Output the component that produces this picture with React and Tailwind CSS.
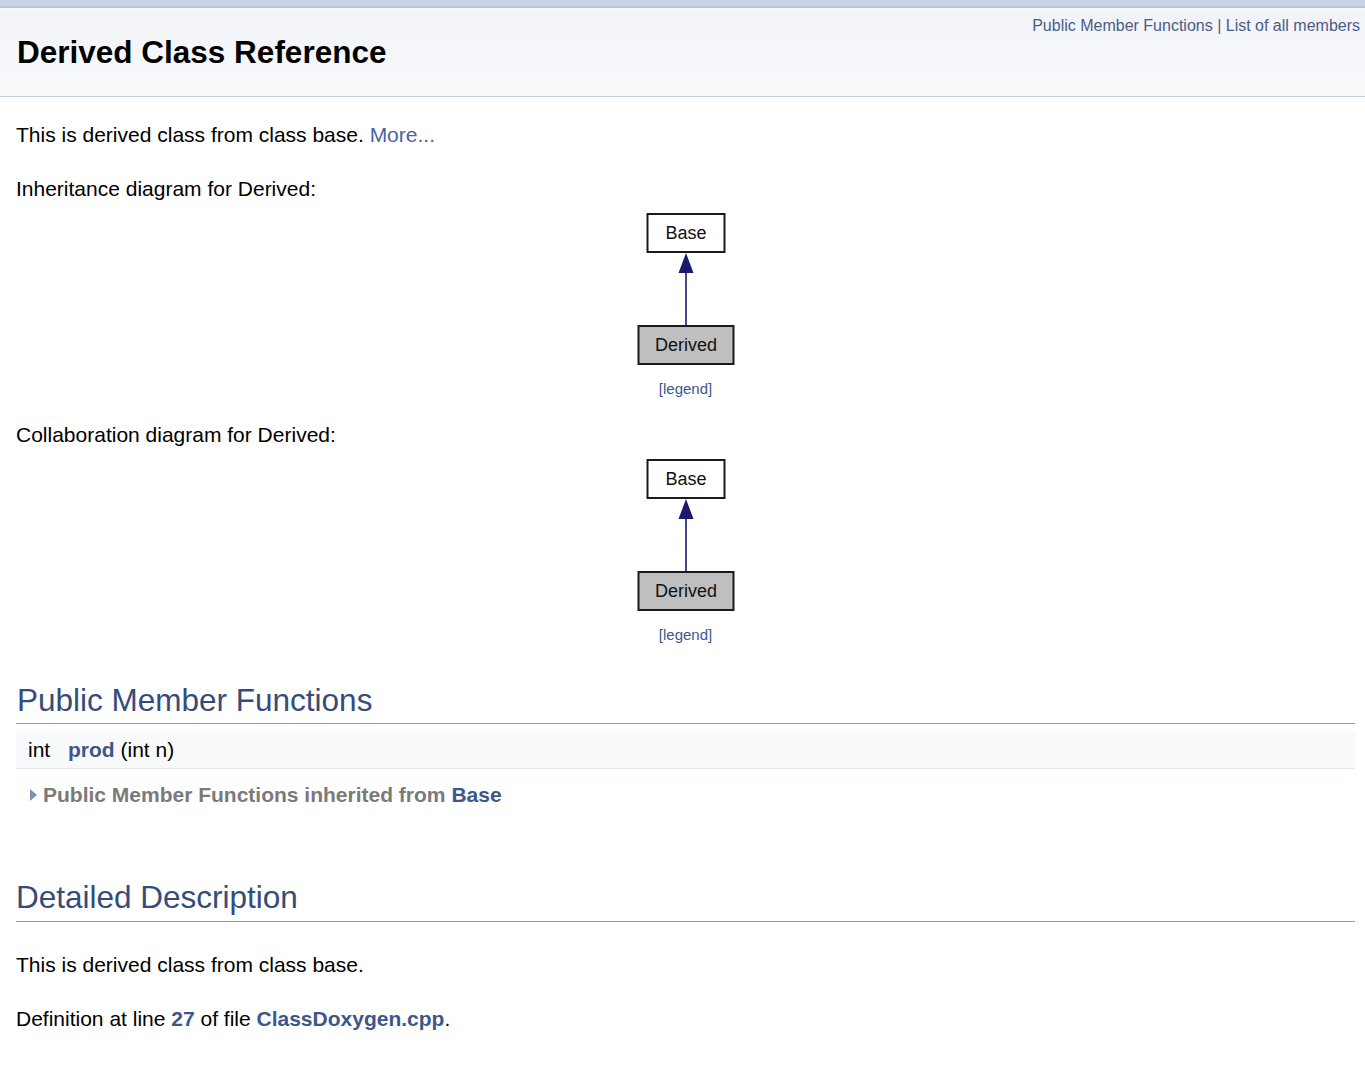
import React from 'react';

const font = { fontFamily: '"Liberation Sans", Arial, sans-serif' };

function ClassDiagram() {
  return (
    <div className="flex flex-col items-center">
      <svg width="100" height="156" viewBox="0 0 100 156" className="mt-[10px]">
        <rect x="11.5" y="3" width="77" height="38" fill="#ffffff" stroke="#1a1a1a" strokeWidth="2" />
        <text x="50" y="28" textAnchor="middle" fontSize="18" fill="#111" fontFamily='"Liberation Sans", Arial, sans-serif'>Base</text>
        <polygon points="50,42 42.5,62 57.5,62" fill="#191970" />
        <line x1="50" y1="61" x2="50" y2="114" stroke="#191970" strokeWidth="1.6" />
        <rect x="2.5" y="115" width="95" height="38" fill="#bfbfbf" stroke="#1a1a1a" strokeWidth="2" />
        <text x="50" y="140" textAnchor="middle" fontSize="18" fill="#111" fontFamily='"Liberation Sans", Arial, sans-serif'>Derived</text>
      </svg>
      <a className="mt-[13px] text-[15px] leading-[18px] text-[#3d578c]">[legend]</a>
    </div>
  );
}

export default function App() {
  return (
    <div className="min-h-screen bg-white text-black" style={font}>
      {/* nav strip */}
      <div className="h-[6px] bg-[#cbd4e7]" />
      <div className="h-[2px] bg-[#b9c3dc]" />
      <div className="h-[1px] bg-[#f7f9fc]" />

      {/* header */}
      <div className="relative h-[88px] border-b border-[#c4cfe5] bg-gradient-to-b from-[#f1f3f8] to-[#f9fafc] px-[17px]">
        <div className="absolute right-[5px] top-[7px] text-[16px] leading-[20px] text-[#4a5d87]">
          <a>Public Member Functions</a> | <a>List of all members</a>
        </div>
        <div className="pt-[25px] text-[31.5px] font-bold leading-[36px]">Derived Class Reference</div>
      </div>

      <div className="pl-[16px] pr-[10px] text-[21px] leading-[24px]">
        <p className="mt-[26px]">
          This is derived class from class base. <a className="text-[#4665a2]">More...</a>
        </p>

        <p className="mt-[30px]">Inheritance diagram for Derived:</p>
        <ClassDiagram />

        <p className="mt-[25px]">Collaboration diagram for Derived:</p>
        <ClassDiagram />

        <h2 className="mt-[38px] border-b border-[#8e9bb9] pb-[5px] pl-[1px] text-[31.5px] font-normal leading-[36px] text-[#354c7b]">
          Public Member Functions
        </h2>

        <div className="mt-[7px] flex h-[38px] items-center border-b border-[#dee4f0] bg-[#f9fafc] pl-[12px]">
          <span className="w-[40px]">int</span>
          <span>
            <a className="font-bold text-[#3d578c]">prod</a> (int n)
          </span>
        </div>

        <div className="mt-[14px] flex items-center pl-[14px] font-bold text-[#7a7a7a]">
          <svg width="8" height="14" viewBox="0 0 8 14" className="mr-[5px]">
            <polygon points="0,1 7,7 0,13" fill="#7c8fb8" />
          </svg>
          <span>
            Public Member Functions inherited from <a className="text-[#3d578c]">Base</a>
          </span>
        </div>

        <h2 className="mt-[72px] border-b border-[#8e9bb9] pb-[6px] text-[31.5px] font-normal leading-[36px] text-[#354c7b]">
          Detailed Description
        </h2>

        <p className="mt-[31px]">This is derived class from class base.</p>
        <p className="mt-[30px]">
          Definition at line <a className="font-bold text-[#3d578c]">27</a> of file{' '}
          <a className="font-bold text-[#3d578c]">ClassDoxygen.cpp</a>.
        </p>
      </div>
    </div>
  );
}
